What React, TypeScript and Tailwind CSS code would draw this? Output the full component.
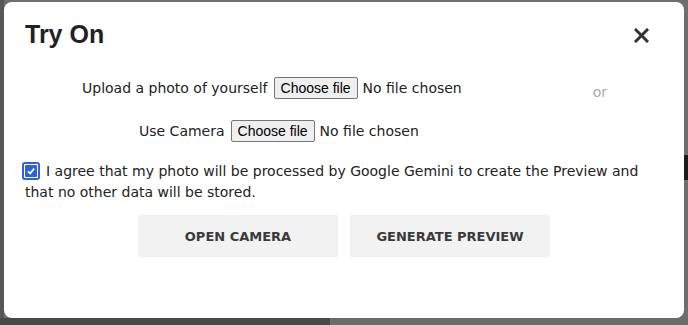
import React from "react";

function FileField({ label }: { label: string }) {
  return (
    <div className="flex h-[22px] items-center">
      <span>{label}</span>
      <span className="ml-[6px] flex h-[22px] items-center rounded-[2px] border border-[#767676] bg-[#efefef] px-[6px] font-['Liberation_Sans',Arial,sans-serif] text-[14px] leading-none text-black">
        Choose file
      </span>
      <span className="ml-[5px]">No file chosen</span>
    </div>
  );
}

export default function App() {
  return (
    <div className="relative h-[325px] w-[688px] overflow-hidden bg-[#6e6e6e] font-['DejaVu_Sans',Verdana,sans-serif]">
      {/* page behind the overlay */}
      <div className="flex h-full flex-col">
        <div className="flex flex-1">
          <div className="w-[4px] bg-[#575757]" />
          <div className="flex-1" />
          <div className="flex w-[4px] flex-col">
            <div className="h-[155px]" />
            <div className="h-[25px] bg-[#1c1c1c]" />
          </div>
        </div>
        <div className="flex h-[7px]">
          <div className="w-[330px] bg-[#494949]" />
          <div className="flex-1 bg-[#6c6c6c]" />
        </div>
      </div>

      {/* modal */}
      <div className="absolute left-[4px] top-[2px] w-[680px] rounded-[8px] bg-white px-[21px] pb-[61px] pt-[18px] text-[14px] leading-[21px] text-[#222]">
        <div className="flex items-center justify-between">
          <h2 className="font-['Liberation_Sans',Arial,sans-serif] text-[25px] font-bold leading-[29px] text-[#222]">
            Try On
          </h2>
          <svg width="15" height="15" viewBox="0 0 15 15" className="mr-[14px] mt-[1px]">
            <path d="M2 2 L13 13 M13 2 L2 13" stroke="#333" strokeWidth="3" strokeLinecap="square" />
          </svg>
        </div>

        <div className="mt-[28px] flex">
          <div className="flex flex-col gap-[21px]">
            <div className="pl-[57px]">
              <FileField label="Upload a photo of yourself" />
            </div>
            <div className="pl-[114px]">
              <FileField label="Use Camera" />
            </div>
          </div>
          <div className="ml-[131px] mt-[5px] text-[#aaa]">or</div>
        </div>

        <p className="mt-[19px]">
          <span className="-ml-[3px] mr-[6px] inline-flex h-[18px] w-[18px] -translate-y-[1px] items-center justify-center rounded-[3px] border-2 border-[#2f62d5] bg-white p-[1px] align-middle">
            <span className="flex h-full w-full items-center justify-center rounded-[1px] bg-[#2f62d5]">
              <svg width="10" height="10" viewBox="0 0 10 10">
                <path d="M2 5.3 L4.2 7.5 L8.2 2.5" fill="none" stroke="white" strokeWidth="1.8" />
              </svg>
            </span>
          </span>
          I agree that my photo will be processed by Google Gemini to create the Preview and that no other data will be stored.
        </p>

        <div className="mt-[12px] flex justify-center gap-[12px]">
          <button className="h-[42px] w-[200px] bg-[#f2f2f2] text-[13px] font-bold text-[#3a3a3a]">
            OPEN CAMERA
          </button>
          <button className="h-[42px] w-[200px] bg-[#f2f2f2] text-[13px] font-bold text-[#3a3a3a]">
            GENERATE PREVIEW
          </button>
        </div>
      </div>
    </div>
  );
}
